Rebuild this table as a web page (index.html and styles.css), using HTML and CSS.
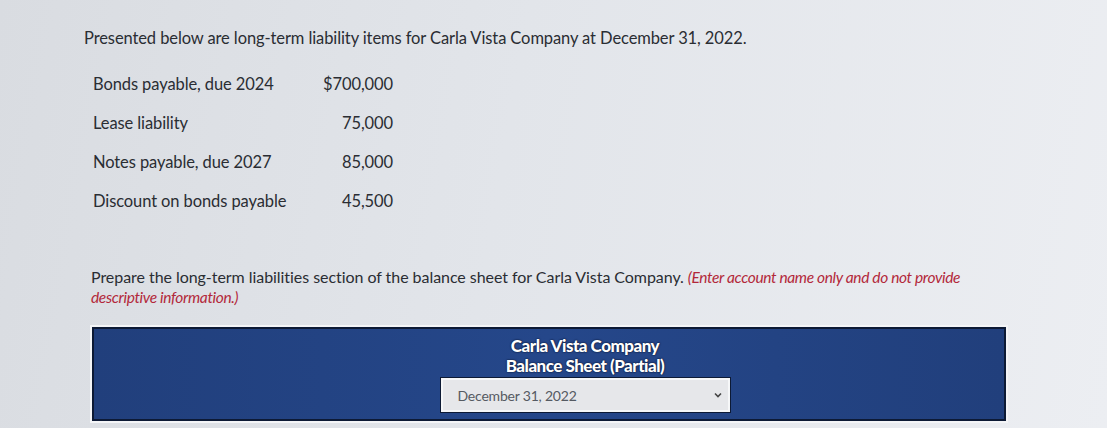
FILE: index.html
```html
<!DOCTYPE html>
<html>
<head>
<meta charset="utf-8">
<link rel="stylesheet" href="styles.css">
</head>
<body>
<div class="page">
  <p class="intro">Presented below are long-term liability items for Carla Vista Company at December 31, 2022.</p>
  <table class="items">
    <tr><td class="label">Bonds payable, due 2024</td><td class="amt">$700,000</td></tr>
    <tr><td class="label">Lease liability</td><td class="amt">75,000</td></tr>
    <tr><td class="label">Notes payable, due 2027</td><td class="amt">85,000</td></tr>
    <tr><td class="label">Discount on bonds payable</td><td class="amt">45,500</td></tr>
  </table>
  <p class="prepare">Prepare the long-term liabilities section of the balance sheet for Carla Vista Company. <em class="note">(Enter account name only and do not provide</em><br><em class="note">descriptive information.)</em></p>
  <div class="sheet-frame">
    <div class="sheet">
      <div class="title">Carla Vista Company</div>
      <div class="title">Balance Sheet (Partial)</div>
      <div class="select">
        <span>December 31, 2022</span>
        <svg class="chev" width="8" height="6" viewBox="0 0 8 6"><path d="M1 1.5 L4 4.5 L7 1.5" fill="none" stroke="#444" stroke-width="1.6"/></svg>
      </div>
    </div>
  </div>
</div>
</body>
</html>
```
FILE: styles.css
```css
html, body {
  margin: 0;
  padding: 0;
  height: 100%;
}
body {
  background: linear-gradient(100deg, #d9dce1 0%, #e2e5ea 45%, #eceef2 100%);
  font-family: Lato, "Open Sans", sans-serif;
  color: #2a2d33;
  overflow: hidden;
}
.page {
  padding: 27px 0 0 84px;
}
.intro {
  margin: 0;
  font-size: 16.5px;
  letter-spacing: -0.1px;
  line-height: 22px;
}
.items {
  border-collapse: collapse;
  margin: 15px 0 0 9px;
  font-size: 16.5px;
  letter-spacing: -0.1px;
}
.items td {
  height: 39px;
  padding: 0;
  vertical-align: middle;
}
.label {
  width: 230px;
}
.amt {
  width: 70px;
  text-align: right;
}
.prepare {
  margin: 47px 0 0 7px;
  width: 900px;
  font-size: 16px;
  line-height: 20px;
  letter-spacing: -0.05px;
}
.note {
  color: #b3283a;
  font-style: italic;
  font-size: 15.5px;
  line-height: 20px;
  letter-spacing: -0.35px;
}
.sheet-frame {
  margin: 18px 0 0 6px;
  width: 918px;
  background: #f4f5f7;
  padding: 2px;
  box-sizing: border-box;
}
.sheet {
  background: linear-gradient(90deg, #213f7c 0%, #25478a 50%, #213f7c 100%);
  border: 2px solid #0d1a35;
  display: flex;
  flex-direction: column;
  align-items: center;
  padding: 7px 0 7px 72px;
}
.title {
  color: #fff;
  font-weight: 900;
  font-size: 17px;
  line-height: 20px;
  letter-spacing: -0.5px;
  text-shadow: 0 0 2px #0b1530, 0 0 1px #0b1530;
}
.select {
  margin-top: 2px;
  width: 289px;
  height: 34px;
  box-sizing: border-box;
  background: #e6e7ea;
  border: 2px solid #f6f7f8;
  outline: 1px solid #0d1a35;
  display: flex;
  align-items: center;
  justify-content: space-between;
  padding: 0 6px 0 15px;
  font-size: 14px;
  color: #555a62;
  letter-spacing: -0.2px;
}
```
